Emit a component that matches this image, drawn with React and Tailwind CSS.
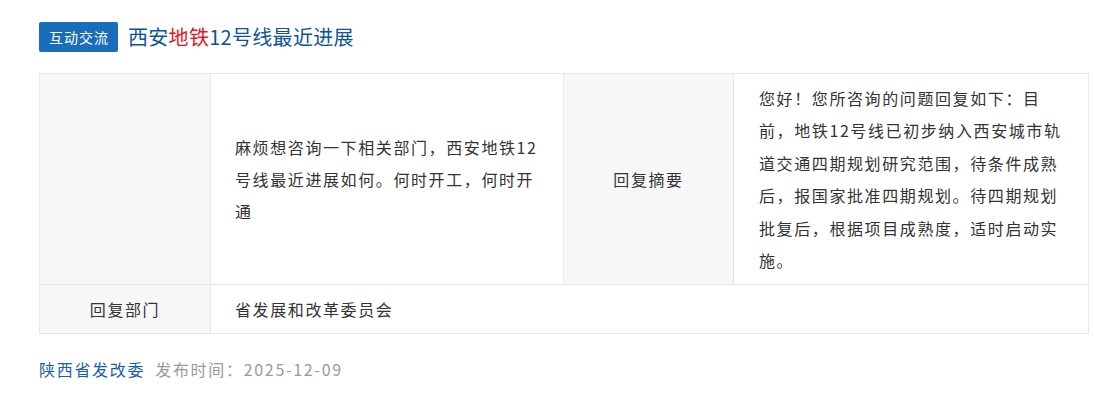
export default function App() {
  const font = { fontFamily: '"Noto Sans CJK SC", "Noto Sans", sans-serif' };
  return (
    <div className="w-[1095px] h-[400px] bg-white pl-[39px] pr-[6px] pt-[22px]" style={font}>
      <div className="flex items-center h-[30px]">
        <span className="flex items-center h-[30px] pl-[10px] pr-[9px] rounded-[2px] bg-[#1a6dbb] text-white text-[14px] tracking-[1px]">
          互动交流
        </span>
        <span className="ml-[10px] text-[20px] leading-[30px] tracking-[0.3px] text-[#0c5399]">
          西安<span className="text-[#e3161e]">地铁</span>12号线最近进展
        </span>
      </div>

      <div className="mt-[21px] grid grid-cols-[171px_353px_170px_1fr] border-t border-l border-[#e8e8e8] text-[16px] tracking-[1.6px] text-[#333333]">
        <div className="bg-[#f7f7f7] border-r border-b border-[#e8e8e8]"></div>
        <div className="flex items-center border-r border-b border-[#e8e8e8] px-[24px] py-[8px] leading-[32.4px]">
          麻烦想咨询一下相关部门，西安地铁12号线最近进展如何。何时开工，何时开通
        </div>
        <div className="flex items-center justify-center bg-[#f7f7f7] border-r border-b border-[#e8e8e8]">
          回复摘要
        </div>
        <div className="flex items-center border-r border-b border-[#e8e8e8] pl-[25px] pr-[24px] py-[8px] leading-[32.4px]">
          您好！您所咨询的问题回复如下：目前，地铁12号线已初步纳入西安城市轨道交通四期规划研究范围，待条件成熟后，报国家批准四期规划。待四期规划批复后，根据项目成熟度，适时启动实施。
        </div>
        <div className="flex items-center justify-center h-[49px] bg-[#f7f7f7] border-r border-b border-[#e8e8e8]">
          回复部门
        </div>
        <div className="col-span-3 flex items-center h-[49px] px-[24px] border-r border-b border-[#e8e8e8]">
          省发展和改革委员会
        </div>
      </div>

      <div className="mt-[22px] flex items-center text-[16px] tracking-[1.7px] leading-[26px]">
        <span className="text-[#1a5fa6]">陕西省发改委</span>
        <span className="ml-[10px] text-[#9a9a9a]">发布时间：2025-12-09</span>
      </div>
    </div>
  );
}
